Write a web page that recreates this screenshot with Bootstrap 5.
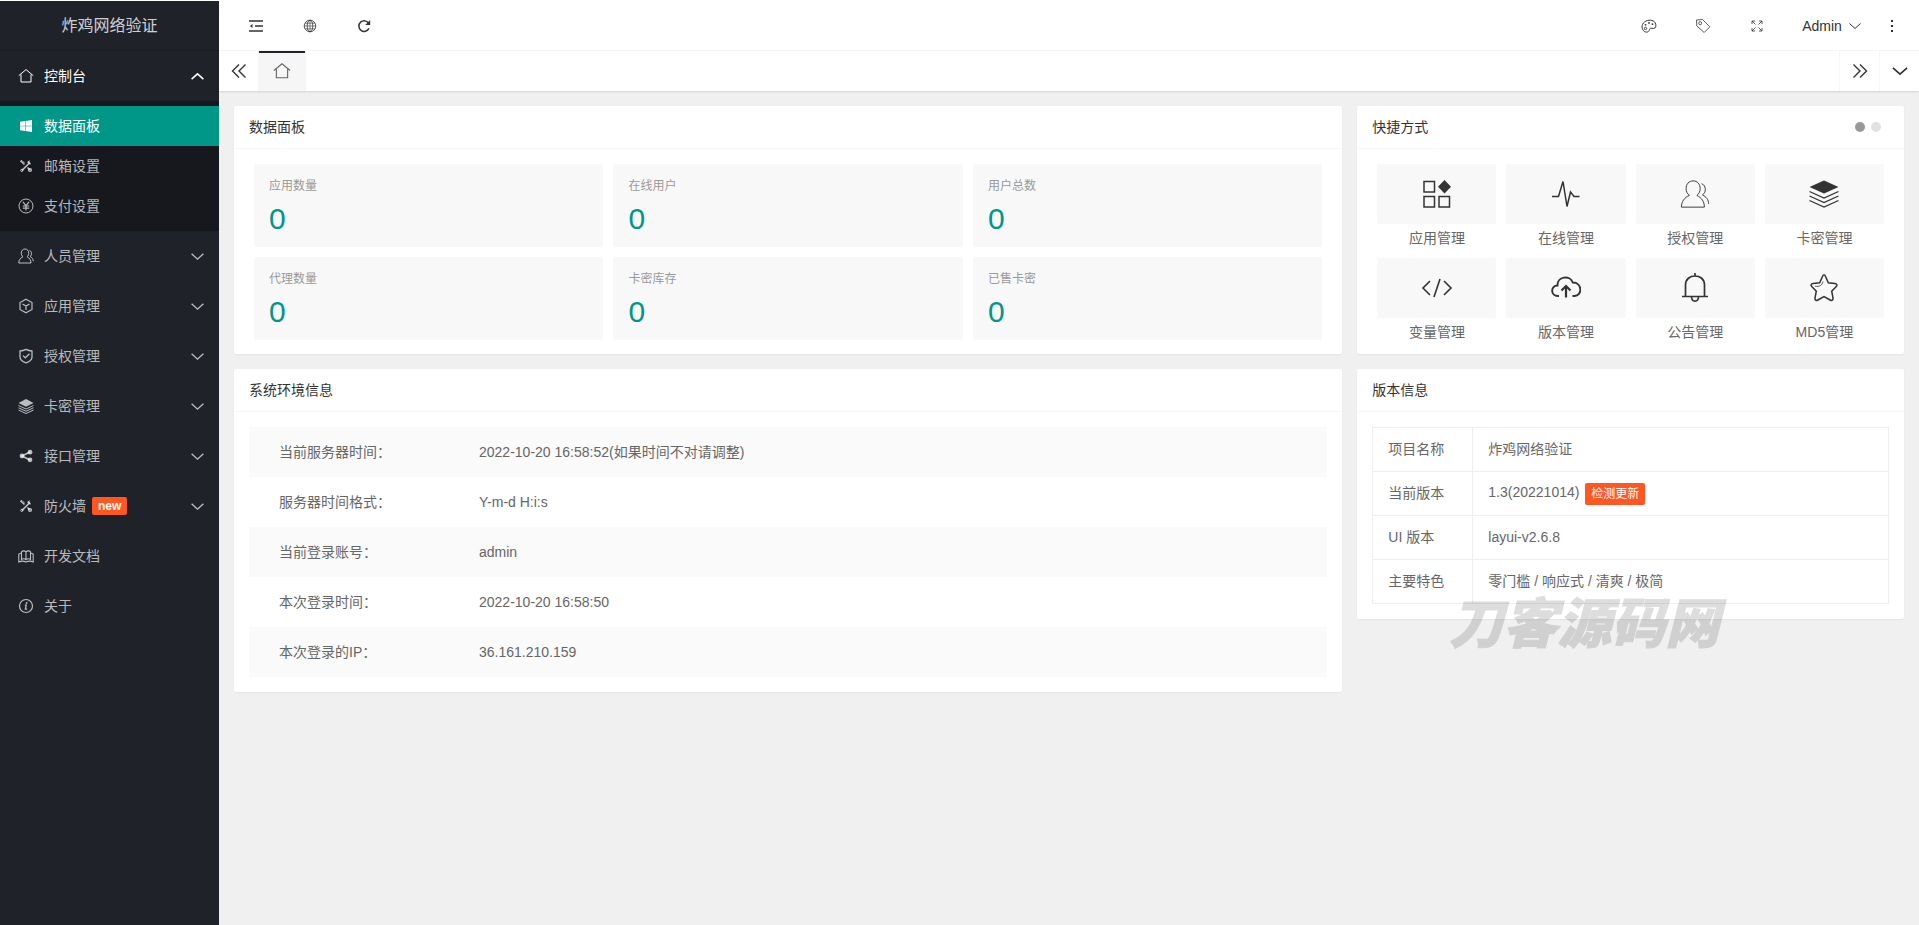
<!DOCTYPE html>
<html lang="zh-CN">
<head>
<meta charset="utf-8">
<meta name="viewport" content="width=device-width, initial-scale=1">
<title>炸鸡网络验证</title>
<link href="https://cdn.jsdelivr.net/npm/bootstrap@5.3.0/dist/css/bootstrap.min.css" rel="stylesheet">
<style>
body{font:14px/24px "Liberation Sans","Noto Sans CJK SC",sans-serif;color:#333;background:#f0f0f0}
a{text-decoration:none;color:inherit}
svg{display:block;fill:none;stroke:currentColor;stroke-width:1;flex:none}
svg.heavy{stroke-width:2}
svg.fine{stroke-width:.8}
.shell{border-top:1px solid #fff}
.side{width:219px;background:#20222a;color:rgba(255,255,255,.7);z-index:2}
.brand{height:50px;font-size:16px;color:rgba(255,255,255,.8);border-bottom:1px solid #1b1d24}
.side .nav-link{height:50px;padding:0 14px 0 18px;color:inherit;display:flex;align-items:center;gap:10px}
.side .nav-link.open{color:#fff}
.side .caret{margin-left:auto}
.submenu{background:#16181d;padding:5px 0}
.submenu .nav-link{height:40px}
.submenu .nav-link.active{background:#009688;color:#fff}
.tag-new{background:#ff5722;color:#fff;font-weight:700;font-size:12px;line-height:18px;padding:0 6px;border-radius:2px;margin-left:-4px}
.topbar{height:50px;border-bottom:1px solid #f6f6f6;background:#fff;padding:0 15px 0 10px}
.tool{border:0;background:none;padding:0;width:54px;height:49px;display:flex;align-items:center;justify-content:center;color:#333}
.tool.user{width:80px;gap:6px}
.tool.more{width:24px}
.tabs{height:40px;background:#fff;box-shadow:0 1px 2px rgba(0,0,0,.12);position:relative}
.tabs .tool{width:40px;height:40px}
.tabs .edge{border-left:1px solid #f6f6f6}
.tabs .tab-home{width:48px;background:#f6f6f6;border:1px solid #f6f6f6;border-width:0 1px;box-shadow:inset 0 2px #20222a;color:#666;margin-left:-1px}
.board{padding:15px}
.board .row{--bs-gutter-x:15px;--bs-gutter-y:15px}
.stack{gap:15px}
.panel{background:#fff;border:0;border-radius:2px;box-shadow:0 1px 2px rgba(0,0,0,.05)}
.panel-head{height:43px;padding:0 15px;border-bottom:1px solid #f6f6f6;font-size:14px;line-height:42px;margin:0;font-weight:400;display:flex;align-items:center}
.panel-head .dots{margin-left:auto;gap:6px;padding-right:8px}
.dot{width:10px;height:10px;border-radius:50%;border:0;padding:0;background:#e2e2e2}
.dot.on{background:#999}
.tiles{display:grid;gap:10px;padding:15px 20px 14px}
.stats{grid-template-columns:repeat(3,1fr)}
.quick{grid-template-columns:repeat(4,1fr);row-gap:6px;padding-bottom:8px}
.stat{background:#f8f8f8;border-radius:2px;padding:10px 15px 7px;color:#999;font-size:12px}
.stat b{display:block;font-weight:400;font-size:30px;line-height:42px;color:#009688}
.quick a{text-align:center;color:#666;display:block;line-height:28px}
.quick .pic{height:60px;background:#f8f8f8;border-radius:2px;color:#333;display:flex;align-items:center;justify-content:center}
.env,.ver{margin:15px}
.env table,.ver table{width:100%}
.env th,.env td,.ver th,.ver td{font-weight:400;color:#666;text-align:left}
.env td,.env th{height:50px;padding:0}
.env th{width:230px;padding-left:30px}
.env tr:nth-child(odd){background:#fafafa}
.ver th,.ver td{border:1px solid #eee;height:44px;padding:0 15px 2px}
.ver th{width:100px}
.check{background:#ff5722;color:#fff;font-size:12px;line-height:22px;border:0;border-radius:2px;padding:0 6px;vertical-align:middle;margin-left:2px}
.wm{position:absolute;left:92px;top:231px;font:italic 900 54px/40px "Noto Sans CJK SC",sans-serif;color:#000;opacity:.13;-webkit-text-stroke:1px #000;white-space:nowrap;pointer-events:none}
</style>
<script src="https://cdn.jsdelivr.net/npm/bootstrap@5.3.0/dist/js/bootstrap.bundle.min.js"></script>
</head>
<body>
<svg width="0" height="0" class="position-absolute">
<symbol id="home" viewBox="0 0 16 16"><path d="M.8 7.600 8 1.600l7.200 6M3 6.500V14h10V6.500"/></symbol>
<symbol id="win" viewBox="0 0 16 16"><path fill="currentColor" stroke="none" d="M2 3.800l5-.7v4.600H2zM7.500 3 14 2v5.700H7.500zM2 8.300h5v4.600L2 12.200zM7.500 8.300H14V14l-6.500-1z"/></symbol>
<symbol id="tools" viewBox="0 0 16 16"><path d="M3.300 3.500l3.200 3M9.500 9.500l3 3M12 4.500 4 12.300" stroke-width="1.700"/><path d="M2.300 3.800 4 2.300M9.800 3.500l2.700 2.800" stroke-width="1.200"/><path d="M10.300 5.300c-.7-1.300.3-2.500 1.700-2.300M4.800 3.200l1.500 1.500" stroke-width="1"/><circle cx="3.800" cy="12.400" r="1.100"/><circle cx="12" cy="12" r="1.500" stroke-width="1.200"/></symbol>
<symbol id="yen" viewBox="0 0 16 16"><circle cx="8" cy="8" r="7"/><path d="M5 3.800l3 4 3-4M8 7.800V12.500M4.800 8h6.400M4.800 10.200h6.400" stroke-width="1.200"/></symbol>
<symbol id="users" viewBox="0 0 32 32"><path d="M10 17.500C5 19.500 1.500 24 1.500 30h24.500c0-6-3-10-8-12.500 2.300-1.700 3.500-4.200 3.500-7.200C21.500 5.500 18.500 2 14 2S6.500 5.500 6.500 10.300c0 3 1.200 5.500 3.500 7.200zM23 5c2.800 1 4 3.400 4 6.300 0 2.300-1 4.300-3 5.700 4 2 6.500 5 6.500 9.500"/></symbol>
<symbol id="cube" viewBox="0 0 16 16"><path stroke-width="1.200" d="M8 1.200l6 3.300v7L8 14.800l-6-3.300v-7zM4.500 6L8 8.100 11.500 6M8 8v4"/></symbol>
<symbol id="shield" viewBox="0 0 16 16"><path stroke-width="1.300" d="M8 1.300c2 1 4 1.500 6 1.700V9c0 3-3 4.800-6 5.800C5 13.800 2 12 2 9V3c2-.2 4-.7 6-1.700zM5 7.600l2.300 2.200 4.200-4"/></symbol>
<symbol id="layers" viewBox="0 0 32 32"><path fill="currentColor" stroke="none" d="M16 2 31 10 16 17.500 1 10z"/><path stroke-width="2" d="M1 15l15 7 15-7M1 19.500l15 7 15-7M1 24l15 7 15-7"/></symbol>
<symbol id="share" viewBox="0 0 16 16"><path d="M12 4 4 8l8 4" stroke-width="1.700"/><g fill="currentColor" stroke="none"><circle cx="4" cy="8" r="2.400"/><circle cx="12" cy="4.200" r="2.400"/><circle cx="12" cy="11.800" r="2.400"/></g></symbol>
<symbol id="book" viewBox="0 0 16 16"><path d="M8 3.800v7.700M8 4C6.800 2.600 4.600 2.500 3.500 3.800V11.500c1.500-1 3.300-.9 4.500.2 1.200-1.100 3-1.200 4.500-.2V3.800C11.400 2.500 9.200 2.600 8 4zM3.300 5 .8 6v8c2.500-1.200 5-1.200 7.200 0 2.200-1.200 4.700-1.200 7.200 0V6l-2.500-1" stroke-width="1.100"/></symbol>
<symbol id="info" viewBox="0 0 16 16"><circle cx="8" cy="8" r="6.500" stroke-width="1.200"/><path d="M6.800 7.200H8.200L7.400 11.200H9.200" stroke-width="1.300"/><circle cx="8.600" cy="5" r=".9" fill="currentColor" stroke="none"/></symbol>
<symbol id="down" viewBox="0 0 14 14"><path d="M1.500 4.500 7 9.500l5.500-5" stroke-width="1.300"/></symbol>
<symbol id="up" viewBox="0 0 14 14"><path d="M1.500 9.500 7 4.500l5.500 5" stroke-width="1.400"/></symbol>
<symbol id="dbl" viewBox="0 0 16 16"><path d="M8 1.500 1.500 8 8 14.500M14.500 1.500 8 8l6.500 6.500" stroke-width="1.400"/></symbol>
</svg>
<div class="shell d-flex min-vh-100">
<aside class="side flex-shrink-0">
  <div class="brand d-flex align-items-center justify-content-center">炸鸡网络验证</div>
  <nav class="nav flex-column flex-nowrap">
    <a class="nav-link open" href="#"><svg width="16" height="16"><use href="#home"/></svg>控制台<svg class="caret" width="15" height="15"><use href="#up"/></svg></a>
    <div class="submenu">
      <a class="nav-link active" href="#"><svg width="16" height="16"><use href="#win"/></svg>数据面板</a>
      <a class="nav-link" href="#"><svg width="16" height="16"><use href="#tools"/></svg>邮箱设置</a>
      <a class="nav-link" href="#"><svg width="16" height="16"><use href="#yen"/></svg>支付设置</a>
    </div>
    <a class="nav-link" href="#"><svg class="heavy" width="16" height="16"><use href="#users"/></svg>人员管理<svg class="caret" width="15" height="15"><use href="#down"/></svg></a>
    <a class="nav-link" href="#"><svg width="16" height="16"><use href="#cube"/></svg>应用管理<svg class="caret" width="15" height="15"><use href="#down"/></svg></a>
    <a class="nav-link" href="#"><svg width="16" height="16"><use href="#shield"/></svg>授权管理<svg class="caret" width="15" height="15"><use href="#down"/></svg></a>
    <a class="nav-link" href="#"><svg width="16" height="16"><use href="#layers"/></svg>卡密管理<svg class="caret" width="15" height="15"><use href="#down"/></svg></a>
    <a class="nav-link" href="#"><svg width="16" height="16"><use href="#share"/></svg>接口管理<svg class="caret" width="15" height="15"><use href="#down"/></svg></a>
    <a class="nav-link" href="#"><svg width="16" height="16"><use href="#tools"/></svg>防火墙<span class="tag-new">new</span><svg class="caret" width="15" height="15"><use href="#down"/></svg></a>
    <a class="nav-link" href="#"><svg width="16" height="16"><use href="#book"/></svg>开发文档</a>
    <a class="nav-link" href="#"><svg width="16" height="16"><use href="#info"/></svg>关于</a>
  </nav>
</aside>
<div class="flex-grow-1">
  <header class="topbar d-flex align-items-center">
    <button class="tool" aria-label="侧边伸缩"><svg width="14" height="12" viewBox="0 0 14 12"><path d="M0 1h14M6 6h8M0 11h14" stroke-width="1.300"/><path d="M3.500 4v4L1 6z" fill="currentColor" stroke="none"/></svg></button>
    <button class="tool" aria-label="前台"><svg class="fine" width="14" height="14" viewBox="0 0 14 14"><circle cx="7" cy="7" r="5.800"/><ellipse cx="7" cy="7" rx="2.800" ry="5.800"/><path d="M7 1v12M1 7h12M2 4.200h10M2 9.800h10" stroke-width=".6"/></svg></button>
    <button class="tool" aria-label="刷新"><svg width="14" height="14" viewBox="0 0 14 14"><path d="M11.800 4.500A5.300 5.300 0 1 0 12 9.300" stroke-width="1.500"/><path d="M13.200 1v5H8.200z" fill="currentColor" stroke="none"/></svg></button>
    <button class="tool ms-auto" aria-label="主题"><svg width="16" height="14" viewBox="0 0 16 14"><path d="M3.500 12.500C.3 10.500.2 5.500 3.500 3 7 .2 12.500.8 14.200 3.800 15.500 6.300 15 9.500 12.500 9.500 10 9 8.700 9 8.500 10.500 8.200 12.500 6 14 3.500 12.500z"/><circle cx="4.500" cy="9.500" r="1.200" stroke-width=".9"/><g fill="currentColor" stroke="none"><circle cx="4.500" cy="5.800" r=".9"/><circle cx="8" cy="3.900" r=".9"/><circle cx="11.500" cy="5.200" r=".9"/></g></svg></button>
    <button class="tool" aria-label="便签"><svg class="fine" width="16" height="16" viewBox="0 0 16 16"><path d="M1.500 2 7.500 1.500 14.800 8.800 9.200 14.500 1.800 8z"/><circle cx="5.200" cy="5.200" r="1.500"/></svg></button>
    <button class="tool" aria-label="全屏"><svg class="fine" width="12" height="12" viewBox="0 0 12 12"><path d="M1 4V1h3M8 1h3v3M11 8v3H8M4 11H1V8M1 1l3.500 3.500M11 1 7.500 4.500M11 11 7.500 7.500M1 11l3.500-3.500"/></svg></button>
    <button class="tool user ms-2">Admin<svg width="14" height="14" viewBox="0 0 14 14"><path d="M1.500 4.500 7 9.500l5.500-5"/></svg></button>
    <button class="tool more ms-2" aria-label="更多"><svg width="4" height="12" viewBox="0 0 4 12"><path fill="currentColor" stroke="none" d="M1 0h2v2H1zM1 5h2v2H1zM1 10h2v2H1z"/></svg></button>
  </header>
  <div class="tabs d-flex">
    <button class="tool" aria-label="向左"><svg width="16" height="16"><use href="#dbl"/></svg></button>
    <button class="tool tab-home" aria-label="主页"><svg width="18" height="18"><use href="#home"/></svg></button>
    <button class="tool edge ms-auto" aria-label="向右"><svg width="16" height="16" viewBox="0 0 16 16"><path d="M1.500 1.500 8 8l-6.500 6.500M8 1.500 14.500 8 8 14.500" stroke-width="1.400"/></svg></button>
    <button class="tool edge" aria-label="标签页"><svg width="18" height="18"><use href="#down"/></svg></button>
  </div>
  <main class="board">
    <div class="row">
      <div class="col-lg-8 d-flex flex-column stack">
        <section class="panel">
          <h2 class="panel-head">数据面板</h2>
          <div class="tiles stats">
            <div class="stat">应用数量<b>0</b></div><div class="stat">在线用户<b>0</b></div><div class="stat">用户总数<b>0</b></div>
            <div class="stat">代理数量<b>0</b></div><div class="stat">卡密库存<b>0</b></div><div class="stat">已售卡密<b>0</b></div>
          </div>
        </section>
        <section class="panel">
          <h2 class="panel-head">系统环境信息</h2>
          <div class="env"><table>
            <tr><th scope="row">当前服务器时间：</th><td>2022-10-20 16:58:52(如果时间不对请调整)</td></tr>
            <tr><th scope="row">服务器时间格式：</th><td>Y-m-d H:i:s</td></tr>
            <tr><th scope="row">当前登录账号：</th><td>admin</td></tr>
            <tr><th scope="row">本次登录时间：</th><td>2022-10-20 16:58:50</td></tr>
            <tr><th scope="row">本次登录的IP：</th><td>36.161.210.159</td></tr>
          </table></div>
        </section>
      </div>
      <div class="col-lg-4 d-flex flex-column stack">
        <section class="panel">
          <h2 class="panel-head">快捷方式<span class="dots d-flex"><button class="dot on" aria-label="第1页"></button><button class="dot" aria-label="第2页"></button></span></h2>
          <div class="tiles quick">
            <a href="#"><span class="pic"><svg width="28" height="28" viewBox="0 0 28 28"><path d="M1 1.500h10.500V12H1zM1 16.500h10.500V27H1zM16 16.500h10.500V27H16z" stroke-width="1.500"/><path d="M21.500 0 28 6.700 21.500 13.400 15 6.700z" fill="currentColor" stroke="none"/></svg></span>应用管理</a>
            <a href="#"><span class="pic"><svg width="28" height="28" viewBox="0 0 28 28"><path d="M0 16.500h6.500L11 1.500l4 25 3.500-14.500L22 16.500h5.500" stroke-width="1.500"/></svg></span>在线管理</a>
            <a href="#"><span class="pic"><svg width="30" height="30"><use href="#users"/></svg></span>授权管理</a>
            <a href="#"><span class="pic"><svg width="30" height="28" viewBox="0 0 30 28"><path fill="currentColor" stroke="none" d="M15 .5 29.500 7 15 13.500.5 7z"/><path stroke-width="1.300" d="M.5 11.500 15 18l14.500-6.500M.5 16 15 22.500 29.500 16M.5 20.500 15 27l14.500-6.500"/></svg></span>卡密管理</a>
            <a href="#"><span class="pic"><svg width="32" height="20" viewBox="0 0 32 20"><path d="M9 3 2 10l7 7M23 3l7 7-7 7M19 1l-6 18" stroke-width="1.600"/></svg></span>变量管理</a>
            <a href="#"><span class="pic"><svg width="30" height="24" viewBox="0 0 30 24"><path d="M8 20H7C-.8 20-.6 9.500 6.500 9.500 6 .5 19-1.500 21.800 6.500 31.500 6.500 31.500 20 23.500 20H21.500" stroke-width="1.900"/><path d="M15 21.500V10.500M10.500 14.500 15 10l4.500 4.500" stroke-width="2.200"/></svg></span>版本管理</a>
            <a href="#"><span class="pic"><svg width="28" height="30" viewBox="0 0 28 30"><path d="M14 0v3M4.500 23.500V12C4.500 6 9 3 14 3s9.500 3 9.500 9v11.500M1 23.500h26M10.500 24c.5 5.500 6.500 5.500 7 0" stroke-width="1.700"/></svg></span>公告管理</a>
            <a href="#"><span class="pic"><svg width="30" height="30" viewBox="0 0 30 30"><path d="M15 2c.8 0 1.300.8 1.700 1.800l2.600 6 6.500.7c2 .3 2.900 1.600 1.500 3l-4.600 4.700 1.300 6.800c.3 2-1 3-2.800 2L15 23.500 8.800 27c-1.800 1-3.100 0-2.800-2l1.300-6.800-4.600-4.700c-1.400-1.400-.5-2.700 1.500-3l6.500-.7 2.600-6C13.700 2.800 14.200 2 15 2z" stroke-width="1.500"/><path d="M6 13.200c4.500.7 7-.5 8-4.700" stroke-width=".8"/></svg></span>MD5管理</a>
          </div>
        </section>
        <section class="panel position-relative">
          <h2 class="panel-head">版本信息</h2>
          <div class="ver"><table>
            <tr><th scope="row">项目名称</th><td>炸鸡网络验证</td></tr>
            <tr><th scope="row">当前版本</th><td>1.3(20221014) <button class="check">检测更新</button></td></tr>
            <tr><th scope="row">UI 版本</th><td>layui-v2.6.8</td></tr>
            <tr><th scope="row">主要特色</th><td>零门槛 / 响应式 / 清爽 / 极简</td></tr>
          </table></div>
          <div class="wm">刀客源码网</div>
        </section>
      </div>
    </div>
  </main>
</div>
</div>
</body>
</html>
